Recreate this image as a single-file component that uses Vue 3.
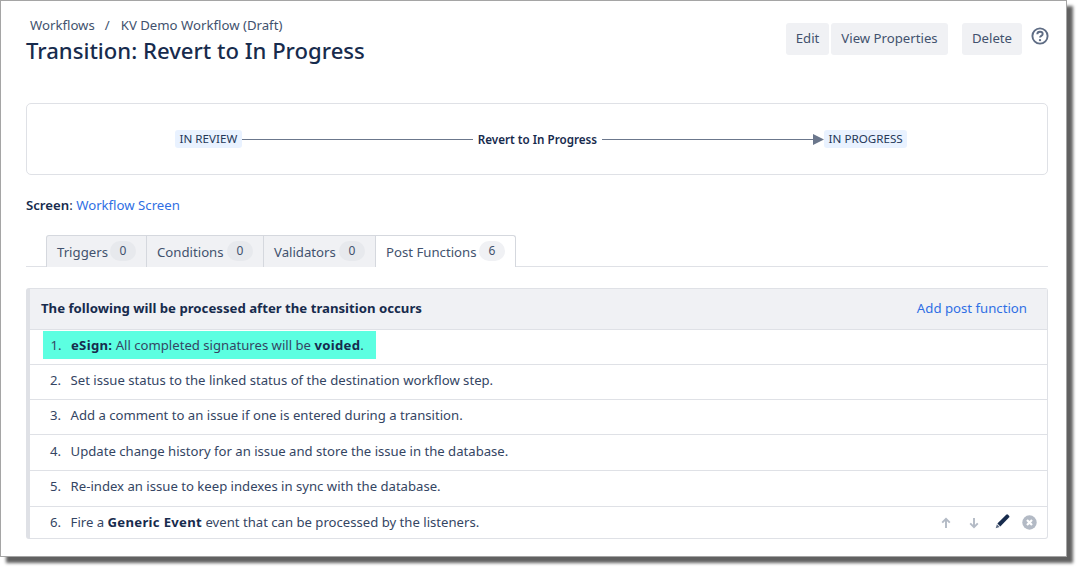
<script setup>
const tabs = [
  { label: 'Triggers', count: 0, width: 101 },
  { label: 'Conditions', count: 0, width: 117 },
  { label: 'Validators', count: 0, width: 112 },
  { label: 'Post Functions', count: 6, width: 140, active: true },
]
</script>

<template>
  <div class="page">
    <div class="window">
      <header class="head">
        <div class="titles">
          <div class="crumbs"><span>Workflows</span><span class="sep">/</span><span>KV Demo Workflow (Draft)</span></div>
          <h1>Transition: Revert to In Progress</h1>
        </div>
        <div class="actions">
          <button class="btn b-edit">Edit</button>
          <button class="btn b-view">View Properties</button>
          <button class="btn b-del">Delete</button>
          <svg class="help" width="18" height="18" viewBox="0 0 18 18">
            <circle cx="9" cy="9" r="7.6" fill="none" stroke="#5e6c84" stroke-width="1.9" />
            <path d="M6.3 7.2c0-1.6 1.2-2.5 2.7-2.5s2.7.9 2.7 2.2c0 2-2.7 1.9-2.7 3.6" fill="none" stroke="#5e6c84" stroke-width="1.9" />
            <circle cx="9" cy="13.1" r="1.2" fill="#5e6c84" />
          </svg>
        </div>
      </header>

      <section class="diagram">
        <span class="lozenge">IN REVIEW</span>
        <span class="line first"></span>
        <strong class="tname">Revert to In Progress</strong>
        <span class="line second"></span>
        <svg class="arrowhead" width="11" height="11" viewBox="0 0 11 11"><path d="M0 0L11 5.5L0 11Z" fill="#6b778c" /></svg>
        <span class="lozenge">IN PROGRESS</span>
      </section>

      <p class="screen"><strong>Screen</strong>: <a>Workflow Screen</a></p>

      <nav class="tabs">
        <div v-for="t in tabs" :key="t.label" class="tab" :class="{ active: t.active }" :style="{ width: t.width + 'px' }">
          <span>{{ t.label }}</span><span class="badge">{{ t.count }}</span>
        </div>
      </nav>

      <section class="panel">
        <div class="panel-head">
          <strong>The following will be processed after the transition occurs</strong>
          <a>Add post function</a>
        </div>
        <div class="row r1">
          <div class="hl"><span class="n">1.</span><span><b>eSign:</b> All completed signatures will be <b>voided</b>.</span></div>
        </div>
        <div class="row"><span class="n">2.</span><span>Set issue status to the linked status of the destination workflow step.</span></div>
        <div class="row"><span class="n">3.</span><span>Add a comment to an issue if one is entered during a transition.</span></div>
        <div class="row r4"><span class="n">4.</span><span>Update change history for an issue and store the issue in the database.</span></div>
        <div class="row"><span class="n">5.</span><span>Re-index an issue to keep indexes in sync with the database.</span></div>
        <div class="row r6">
          <span class="n">6.</span><span>Fire a <b>Generic Event</b> event that can be processed by the listeners.</span>
          <div class="icons">
            <svg width="12" height="12" viewBox="0 0 12 12"><path d="M6 11V2M2.2 5.6L6 1.8l3.8 3.8" fill="none" stroke="#b3bac5" stroke-width="1.9" /></svg>
            <svg class="down" width="12" height="12" viewBox="0 0 12 12"><path d="M6 1v9M2.2 6.4L6 10.2l3.8-3.8" fill="none" stroke="#b3bac5" stroke-width="1.9" /></svg>
            <svg class="pencil" width="15" height="15" viewBox="0 0 15 15"><path d="M11.2.8a1.3 1.3 0 0 1 1.8 0l1 1a1.3 1.3 0 0 1 0 1.8L5.3 12.4 2.4 9.6z" fill="#172b4d" /><path d="M1.9 10.3l2.7 2.7-3.9 1.2z" fill="#5e6c84" /></svg>
            <svg class="close" width="15" height="15" viewBox="0 0 15 15"><circle cx="7.5" cy="7.5" r="7.2" fill="#b3bac5" /><path d="M5 5l5 5M10 5l-5 5" stroke="#fff" stroke-width="2.2" /></svg>
          </div>
        </div>
      </section>
    </div>
  </div>
</template>

<style>
html, body { margin: 0; background: #fff; }
</style>

<style scoped>
.page { width: 1082px; height: 573px; overflow: hidden; font-family: "Noto Sans", "Open Sans", sans-serif; color: #172b4d; font-size: 13.2px; }
.window { box-sizing: border-box; width: 1067px; height: 557px; border: 1px solid #a5a5a5; box-shadow: 6px 6px 3px rgba(0,0,0,.62); padding: 0 18px 0 25px; background: #fff; }
.head { display: flex; justify-content: space-between; height: 102px; }
.titles { padding-top: 15px; }
.crumbs { padding-left: 4px; color: #42526e; line-height: 18px; display: flex; }
.sep { margin: 0 11px 0 10px; }
h1 { margin: 0; font-size: 22.1px; font-weight: 500; line-height: 32px; color: #172b4d; }
.actions { display: flex; align-items: flex-start; padding-top: 22px; margin-right: -1px; }
.btn { height: 32px; border: 0; border-radius: 3px; background: #f0f1f4; color: #42526e; font: inherit; padding: 0 0 2px; }
.b-edit { width: 43px; margin-right: 2px; }
.b-view { width: 117px; margin-right: 14px; }
.b-del { width: 60px; margin-right: 9px; }
.help { margin-top: 4px; }
.diagram { box-sizing: border-box; height: 72px; border: 1px solid #dfe1e6; border-radius: 5px; display: flex; align-items: center; justify-content: flex-start; padding-left: 148px; font-size: 11.65px; }
.lozenge { background: #e9f2ff; border-radius: 3px; height: 18px; line-height: 18px; padding: 0 4.5px; color: #253858; white-space: nowrap; }
.line { height: 1px; background: #6b778c; }
.first { width: 231px; }
.second { width: 211px; }
.tname { margin: 0 5px; font-weight: 600; white-space: nowrap; }
.screen { margin: 21px 0 0; line-height: 18px; }
.screen strong { font-weight: 600; }
.screen a { color: #2f6fe4; }
.tabs { display: flex; margin-top: 21px; padding-left: 20px; height: 32px; box-sizing: border-box; border-bottom: 1px solid #dfe1e6; }
.tab { box-sizing: border-box; flex: none; height: 32px; display: flex; align-items: center; justify-content: space-between; border: 1px solid #d5d8de; border-bottom: 0; border-left-width: 0; background: #f0f1f4; color: #42526e; padding: 0 10px 0 10px; white-space: nowrap; }
.tab:first-child { border-left-width: 1px; border-top-left-radius: 3px; }
.tab:last-child { border-top-right-radius: 3px; }
.tab.active { background: #fff; }
.badge { min-width: 26px; height: 20px; line-height: 20px; margin-top: -2px; text-align: center; border-radius: 10px; background: #e7e9ed; font-size: 12px; color: #42526e; }
.active .badge { background: #f0f1f4; }
.panel { margin-top: 21px; height: 251px; box-sizing: border-box; border: 1px solid #dfe1e6; border-left: 4px solid #dfe1e6; border-radius: 3px; }
.panel-head { height: 41px; box-sizing: border-box; background: #f0f1f4; display: flex; align-items: center; justify-content: space-between; padding: 0 20px 2px 11px; border-bottom: 1px solid #dfe1e6; }
.panel-head strong { font-weight: 700; }
.panel-head a { color: #2f6fe4; }
.row { display: flex; align-items: center; border-bottom: 1px solid #dfe1e6; padding: 0 0 5px 20px; color: #344563; font-size: 13.14px; height: 35.2px; box-sizing: border-box; }
.row b { font-weight: 700; color: #172b4d; letter-spacing: .3px; }
.n { width: 20.6px; flex: none; }
.r1 { height: 35px; padding: 0 0 0 13px; }
.hl { display: flex; align-items: center; box-sizing: border-box; width: 333px; height: 28px; background: #5cffe1; padding: 0 0 1px 7.4px; margin-top: -4px; }
.r4 { height: 36px; padding-bottom: 4px; }
.r6 { height: 32px; border-bottom: 0; padding-bottom: 1px; }
.icons { margin-left: auto; display: flex; align-items: center; padding-right: 10px; margin-bottom: -1px; }
.down { margin-left: 16px; }
.pencil { margin-left: 15px; margin-top: -3px; }
.close { margin-left: 12px; }
</style>
